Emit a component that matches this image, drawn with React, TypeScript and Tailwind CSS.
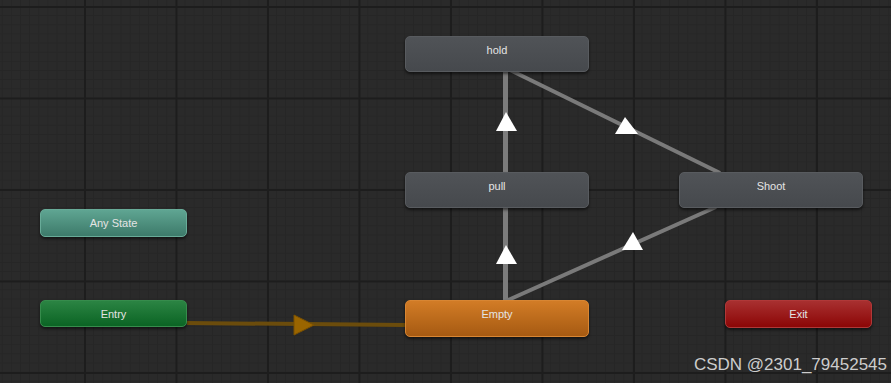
import React from "react";

type NodeProps = {
  label: string;
  x: number;
  y: number;
  w: number;
  h: number;
  cls: string;
};

const nodes: NodeProps[] = [
  { label: "hold", x: 405, y: 36, w: 184, h: 36, cls: "bg-[linear-gradient(to_bottom,#505357,#46494d)] border-[#585b5f]" },
  { label: "pull", x: 405, y: 172, w: 184, h: 36, cls: "bg-[linear-gradient(to_bottom,#505357,#46494d)] border-[#585b5f]" },
  { label: "Shoot", x: 679, y: 172, w: 184, h: 36, cls: "bg-[linear-gradient(to_bottom,#505357,#46494d)] border-[#585b5f]" },
  { label: "Any State", x: 40, y: 209, w: 147, h: 28, cls: "bg-[linear-gradient(to_bottom,#5fa592,#3d7a6a)] border-[#68ab98]" },
  { label: "Entry", x: 40, y: 300, w: 147, h: 27, cls: "bg-[linear-gradient(to_bottom,#2b8443,#0b6424)] border-[#368c4c]" },
  { label: "Empty", x: 405, y: 300, w: 184, h: 37, cls: "bg-[linear-gradient(to_bottom,#d27c26,#a65a12)] border-[#d88633]" },
  { label: "Exit", x: 725, y: 300, w: 147, h: 28, cls: "bg-[linear-gradient(to_bottom,#a83030,#8c0606)] border-[#b03838]" },
];

function Node({ label, x, y, w, h, cls }: NodeProps) {
  return (
    <div
      className={`absolute rounded-[5px] border text-center text-[11px] leading-[16px] pt-[5px] text-[#e4e4e4] shadow-[0_2px_3px_rgba(0,0,0,0.55)] ${cls}`}
      style={{ left: x, top: y, width: w, height: h }}
    >
      {label}
    </div>
  );
}

export default function App() {
  return (
    <div
      className="relative w-[891px] h-[383px] overflow-hidden bg-[#2a2a2a] [background-image:linear-gradient(to_right,#1d1d1d_2px,transparent_2px),linear-gradient(to_bottom,#1d1d1d_2px,transparent_2px),linear-gradient(to_right,#262626_1px,transparent_1px),linear-gradient(to_bottom,#262626_1px,transparent_1px)] [background-size:91.5px_91.5px,91.5px_91.5px,9.15px_9.15px,9.15px_9.15px] [background-position:84px_6px] font-['Liberation_Sans',Arial,sans-serif]"
    >
      <svg className="absolute left-0 top-0" width={891} height={383}>
        <line x1={187} y1={323} x2={405} y2={325} stroke="#6b4c0c" strokeWidth={4} />
        <polygon points="294,315 294,335 314,325" fill="#9a6500" stroke="#7a5000" strokeWidth={1} />
        <line x1={505.5} y1={70} x2={505.5} y2={173} stroke="#7c7c7c" strokeWidth={5} />
        <line x1={505.5} y1={207} x2={505.5} y2={301} stroke="#7c7c7c" strokeWidth={5} />
        <line x1={510} y1={70} x2={720} y2={173} stroke="#7a7a7a" strokeWidth={4} />
        <line x1={506} y1={301} x2={716} y2={207} stroke="#7a7a7a" strokeWidth={4} />
        <polygon points="506,112 496,131 517,131" fill="#ffffff" />
        <polygon points="506,245 496,264 517,264" fill="#ffffff" />
        <polygon points="625,117 615,134 638,134" fill="#ffffff" />
        <polygon points="633,232 622,250 643,250" fill="#ffffff" />
      </svg>
      {nodes.map((n) => (
        <Node key={n.label} {...n} />
      ))}
      <div className="absolute right-[4px] top-[354px] text-[17px] leading-[22px] text-[#cdcdcd] font-['Liberation_Sans',Arial,sans-serif]">
        CSDN @2301_79452545
      </div>
    </div>
  );
}
